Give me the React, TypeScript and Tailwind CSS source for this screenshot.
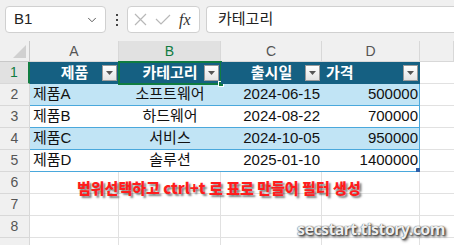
import { ChevronDown } from "lucide-react";

const rows = [
  ["제품A", "소프트웨어", "2024-06-15", "500000"],
  ["제품B", "하드웨어", "2024-08-22", "700000"],
  ["제품C", "서비스", "2024-10-05", "950000"],
  ["제품D", "솔루션", "2025-01-10", "1400000"],
];

function FilterButton() {
  return (
    <span className="absolute right-[2px] top-[3px] flex h-[16px] w-[15px] items-center justify-center border border-[#9b9b9b] bg-gradient-to-b from-[#ffffff] to-[#e4e4e4]">
      <svg width="7" height="4" viewBox="0 0 7 4">
        <path d="M0 0h7L3.5 4z" fill="#555" />
      </svg>
    </span>
  );
}

function HeaderCell({ label, align, selected }: { label: string; align: string; selected?: boolean }) {
  return (
    <div className={`relative flex h-full items-center bg-[#156082] text-[15px] font-bold text-white ${align}`}>
      <span className={align === "justify-start" ? "pl-[4px]" : ""}>{label}</span>
      <FilterButton />
      {selected && (
        <>
          <div className="pointer-events-none absolute -left-[1px] -top-[1px] h-[24px] w-[104px] border-2 border-[#107c41]" />
          <div className="absolute -bottom-[3px] -right-[3px] h-[6px] w-[6px] border border-white bg-[#107c41]" />
        </>
      )}
    </div>
  );
}

export default function App() {
  const colHeads = ["A", "B", "C", "D", ""];
  return (
    <div className="relative h-[245px] w-[454px] overflow-hidden bg-[#f0f0f0] font-[family-name:'Liberation_Sans','Noto_Sans_CJK_KR',sans-serif] text-[#222]">
      {/* formula bar */}
      <div className="flex h-[41px] items-start pl-[5px] pt-[6px]">
        <div className="flex h-[27px] w-[101px] items-center justify-between rounded-[4px] border border-[#d0d0d0] bg-white pl-[8px] pr-[6px] text-[15px]">
          <span>B1</span>
          <ChevronDown size={14} strokeWidth={1.5} className="text-[#444]" />
        </div>
        <div className="flex h-[27px] w-[21px] flex-col items-center justify-center gap-[3px]">
          <span className="h-[2px] w-[2px] bg-[#444]" />
          <span className="h-[2px] w-[2px] bg-[#444]" />
          <span className="h-[2px] w-[2px] bg-[#444]" />
        </div>
        <div className="flex h-[27px] w-[73px] items-center gap-[8px] rounded-[4px] border border-[#d0d0d0] bg-white pl-[6px]">
          <svg width="13" height="13" viewBox="0 0 13 13" stroke="#b8b8b8" strokeWidth="1.2" fill="none">
            <path d="M1 1l11 11M12 1L1 12" />
          </svg>
          <svg width="16" height="12" viewBox="0 0 16 12" stroke="#b8b8b8" strokeWidth="1.2" fill="none">
            <path d="M1 5l5 5L15 1" />
          </svg>
          <span className="font-[family-name:'Liberation_Serif',serif] text-[16px] italic leading-none text-[#333]">fx</span>
        </div>
        <div className="ml-[6px] flex h-[27px] flex-1 items-center rounded-l-[4px] border border-r-0 border-[#d0d0d0] bg-white pl-[11px] text-[15px]">
          카테고리
        </div>
      </div>

      {/* sheet */}
      <div className="grid grid-cols-[30px_89px_102px_101px_98px_1fr] grid-rows-[21px_repeat(9,22px)] bg-white">
        {/* column headers */}
        <div className="relative border-b border-r border-[#c8c8c8] bg-[#f0f0f0]">
          <svg className="absolute bottom-[3px] right-[3px]" width="13" height="13" viewBox="0 0 13 13">
            <path d="M13 0v13H0z" fill="#d0d0d0" />
          </svg>
        </div>
        {colHeads.map((c) => (
          <div
            key={c || "E"}
            className={`flex items-center justify-center border-b border-r border-[#d8d8d8] text-[14px] ${
              c === "B" ? "bg-[#e1e1e1] text-[#107c41]" : "bg-[#f0f0f0] text-[#555]"
            }`}
          >
            {c}
          </div>
        ))}

        {/* row 1 */}
        <div className="flex items-center justify-center border-b border-r-2 border-b-[#d8d8d8] border-r-[#107c41] bg-[#e1e1e1] text-[14px] text-[#107c41]">
          1
        </div>
        <HeaderCell label="제품" align="justify-center" />
        <HeaderCell label="카테고리" align="justify-center" selected />
        <HeaderCell label="출시일" align="justify-center" />
        <HeaderCell label="가격" align="justify-start" />
        <div className="border-b border-[#e1e1e1]" />

        {/* data rows */}
        {rows.map((r, i) => {
          const band = i % 2 === 0 ? "bg-[#c1e4f5]" : "bg-white";
          const cell = `flex items-center border-b border-[#4aa8dc] text-[15px] text-[#111] ${band}`;
          return (
            <div key={r[0]} className="contents">
              <div className="flex items-center justify-center border-b border-r border-[#d8d8d8] bg-[#f0f0f0] text-[14px] text-[#555]">
                {i + 2}
              </div>
              <div className={`${cell} pl-[3px]`}>{r[0]}</div>
              <div className={`${cell} justify-center`}>{r[1]}</div>
              <div className={`${cell} justify-end pr-[2px]`}>{r[2]}</div>
              <div className={`${cell} relative justify-end border-r border-r-[#4aa8dc] pr-[1px]`}>
                {r[3]}
                {i === 3 && <span className="absolute -bottom-[1px] -right-[1px] h-[4px] w-[4px] bg-[#2f5fa8]" />}
              </div>
              <div className="border-b border-[#e1e1e1]" />
            </div>
          );
        })}

        {/* empty rows */}
        {[6, 7, 8, 9].map((n) => (
          <div key={n} className="contents">
            <div className="flex items-center justify-center border-b border-r border-[#d8d8d8] bg-[#f0f0f0] text-[14px] text-[#555]">
              {n < 9 ? n : ""}
            </div>
            <div className="border-b border-r border-[#e1e1e1]" />
            <div className="border-b border-r border-[#e1e1e1]" />
            <div className="border-b border-r border-[#e1e1e1]" />
            <div className="border-b border-r border-[#e1e1e1]" />
            <div className="border-b border-[#e1e1e1]" />
          </div>
        ))}
      </div>

      {/* annotations */}
      <div className="absolute left-[77px] top-[177px] font-[family-name:'Noto_Sans_CJK_KR',sans-serif] text-[15px] font-black leading-[22px] text-[#ff1c1c] [text-shadow:2px_2px_2px_rgba(0,0,0,0.5)]">
        범위선택하고 ctrl+t 로 표로 만들어 필터 생성
      </div>
      <div className="absolute left-[297px] top-[217px] font-[family-name:'Noto_Sans',sans-serif] text-[16px] font-bold leading-[24px] tracking-[-0.6px] text-[#eeeeee] [text-shadow:0_0_1px_#333,1px_1px_2px_#333,2px_2px_3px_rgba(0,0,0,0.5)]">
        secstart.tistory.com
      </div>
    </div>
  );
}
